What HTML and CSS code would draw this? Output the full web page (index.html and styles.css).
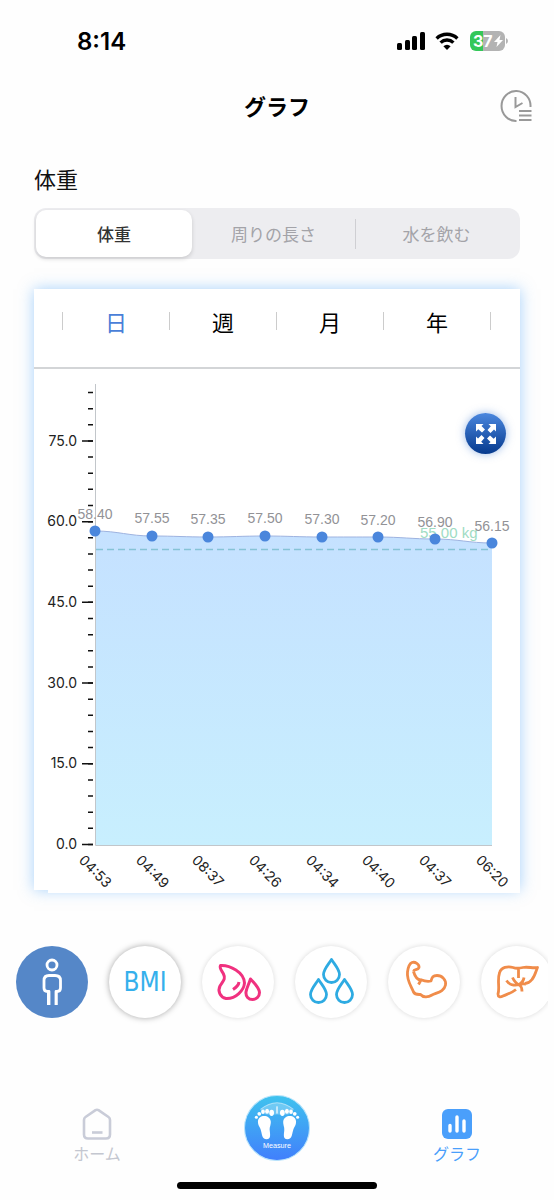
FILE: index.html
```html
<!DOCTYPE html>
<html lang="ja">
<head>
    <meta charset="UTF-8">
    <meta name="viewport" content="width=device-width, initial-scale=1.0">
    <title>グラフ</title>
    <link rel="stylesheet" href="styles.css">
</head>
<body>
    <!-- Status bar -->
    <div class="status">
        <span class="time">8:14</span>
        <div class="status-icons">
            <svg width="28" height="20" viewBox="0 0 28 20">
                <rect x="0" y="12" width="5" height="7" rx="1.5"/>
                <rect x="8" y="9" width="5" height="10" rx="1.5"/>
                <rect x="15" y="5" width="5" height="14" rx="1.5"/>
                <rect x="23" y="1" width="5" height="18" rx="1.5"/>
            </svg>
            <svg width="24" height="20" viewBox="0 0 24 20">
                <path d="M1.6 7.4a15 15 0 0 1 20.8 0M5.6 11.6a9.2 9.2 0 0 1 12.8 0" fill="none" stroke="#000" stroke-width="3.4"/>
                <path d="M12 19l-3.6-3.8a5 5 0 0 1 7.2 0z"/>
            </svg>
            <svg width="39" height="22" viewBox="0 0 39 22">
                <path d="M7 1h7v20H7a6 6 0 0 1-6-6V7a6 6 0 0 1 6-6z" fill="#34c759"/>
                <path d="M14 1h16a6 6 0 0 1 6 6v8a6 6 0 0 1-6 6H14z" fill="#b3b3b3"/>
                <path d="M37 8q2 1 2 3t-2 3z" fill="#b3b3b3"/>
                <text class="battery-text" x="4" y="17">37</text>
                <path d="M31.500 5l-6.500 7h3.500l-1 5 6.500-7h-3.500z" fill="#fff"/>
            </svg>
        </div>
    </div>

    <header>
        <h1>グラフ</h1>
        <button class="history" aria-label="履歴">
            <svg width="32" height="34" viewBox="0 0 32 34" fill="none" stroke="#999" stroke-width="2">
                <path d="M30.500 18A14.500 15 0 1 0 16.500 32M15.500 8v10l7-4M19 22h12.500M19 26.500h12.500M19 31h12.500"/>
            </svg>
        </button>
    </header>

    <main>
        <h2>体重</h2>

        <div class="segments">
            <button class="segment selected">体重</button>
            <button class="segment">周りの長さ</button>
            <button class="segment divided">水を飲む</button>
        </div>

        <div class="card">
            <div class="periods">
                <button class="period active">日</button>
                <button class="period">週</button>
                <button class="period">月</button>
                <button class="period">年</button>
            </div>

            <svg class="chart" viewBox="0 0 486 521">
                <defs>
                    <linearGradient id="area" x1="0" y1="0" x2="0" y2="1">
                        <stop offset="0" stop-color="#c5e1ff"/>
                        <stop offset="1" stop-color="#c8effe"/>
                    </linearGradient>
                </defs>
                <path d="M61 162C84 162 95 167 118 167S151 168 174 168S208 167 231 167S265 168 288 168S321 168 344 168S378 170 401 170S435 174 458 174V476H61Z" fill="url(#area)"/>
                <path d="M61 162C84 162 95 167 118 167S151 168 174 168S208 167 231 167S265 168 288 168S321 168 344 168S378 170 401 170S435 174 458 174" fill="none" stroke="#9eb3e0"/>
                <path d="M61.500 15V476.500H458" fill="none" stroke="#c2c6ca"/>
                <path d="M62 180.500H458" stroke="#86c3d6" stroke-width="1.500" stroke-dasharray="7 4"/>

                <!-- scale ticks -->
                <path d="M56.500 476.200V22" stroke="#111" stroke-width="5" stroke-dasharray="1.500 14.640"/>
                <path d="M53.500 476.200V70" stroke="#111" stroke-width="11" stroke-dasharray="1.500 79.200"/>
                <g class="scale">
                    <text x="43" y="77">75.0</text>
                    <text x="43" y="157">60.0</text>
                    <text x="43" y="238">45.0</text>
                    <text x="43" y="319">30.0</text>
                    <text x="43" y="399">15.0</text>
                    <text x="43" y="480">0.0</text>
                </g>

                <text class="goal" x="386" y="169">55.00 kg</text>
                <g fill="#4a86dc">
                    <circle cx="61" cy="162" r="5.500"/>
                    <circle cx="118" cy="167" r="5.500"/>
                    <circle cx="174" cy="168" r="5.500"/>
                    <circle cx="231" cy="167" r="5.500"/>
                    <circle cx="288" cy="168" r="5.500"/>
                    <circle cx="344" cy="168" r="5.500"/>
                    <circle cx="401" cy="170" r="5.500"/>
                    <circle cx="458" cy="174" r="5.500"/>
                </g>
                <g class="values">
                    <text x="61" y="150">58.40</text>
                    <text x="118" y="154">57.55</text>
                    <text x="174" y="155">57.35</text>
                    <text x="231" y="154">57.50</text>
                    <text x="288" y="155">57.30</text>
                    <text x="344" y="156">57.20</text>
                    <text x="401" y="158">56.90</text>
                    <text x="458" y="162">56.15</text>
                </g>
                <g class="times">
                    <text transform="translate(44 492) rotate(45)">04:53</text>
                    <text transform="translate(101 492) rotate(45)">04:49</text>
                    <text transform="translate(157 492) rotate(45)">08:37</text>
                    <text transform="translate(214 492) rotate(45)">04:26</text>
                    <text transform="translate(271 492) rotate(45)">04:34</text>
                    <text transform="translate(327 492) rotate(45)">04:40</text>
                    <text transform="translate(384 492) rotate(45)">04:37</text>
                    <text transform="translate(441 492) rotate(45)">06:20</text>
                </g>
            </svg>

            <button class="expand" aria-label="拡大">
                <svg width="20" height="20" viewBox="0 0 20 20" fill="#fff">
                    <path id="arrow" d="M0 0H7.500L5.500 2L9 5.500L6 8.500L2.300 5.200L0 7.500Z"/>
                    <use href="#arrow" transform="rotate(90 10 10)"/>
                    <use href="#arrow" transform="rotate(180 10 10)"/>
                    <use href="#arrow" transform="rotate(270 10 10)"/>
                </svg>
            </button>
        </div>
    </main>

    <!-- Metric picker -->
    <div class="metrics">
        <button class="metric current" aria-label="体重">
            <svg viewBox="0 0 72 72" stroke="#fff" stroke-width="2.800">
                <circle cx="36" cy="19" r="5"/>
                <path d="M33 59V45.500H31.500Q28 45.500 28 42V34.500Q28 29.500 33 29.500H39Q44.500 29.500 44.500 34.500V42Q44.500 45.500 41 45.500H40V59"/>
                <path d="M31.800 45V59M40.800 45V59" stroke-width="1.600"/>
            </svg>
        </button>
        <button class="metric bmi">BMI</button>
        <button class="metric" aria-label="体脂肪">
            <svg viewBox="0 0 72 72" stroke="#f0317f" stroke-width="3">
                <path d="M18.500 19.500C28 19 42 26 42.500 37C42 44 34 53 24 52.500C18 51 15.500 45 18 40C21 35 24 33 21.500 28C20 25 17 22 18.500 19.500Z"/>
                <path d="M37 36Q36.500 40 31 43.500"/>
                <path d="M48.500 33C53 38 57.500 42 57.500 46.500C57.500 51 54 53.500 50.500 53.500C46.500 53.500 43.500 50.500 44 46C44.500 42 47 38 48.500 33Z"/>
            </svg>
        </button>
        <button class="metric" aria-label="水分">
            <svg viewBox="0 0 72 72" stroke="#2eabe2" stroke-width="2.800">
                <path id="drop" d="M36.500 13.500C33 19 28.500 23.500 28.500 28.500A8 8 0 0 0 44.500 28.500C44.500 23.500 40 19 36.500 13.500Z"/>
                <use href="#drop" x="-13" y="20"/>
                <use href="#drop" x="13" y="20"/>
            </svg>
        </button>
        <button class="metric" aria-label="筋肉">
            <svg viewBox="0 0 72 72" stroke="#f08c4a" stroke-width="2.800">
                <path d="M25.500 25.500C26 23 30 24.500 31 21.500C31.500 18 27 15.500 24 16.500C20.500 18 20 22 19.500 26C18.500 34 23 40 25.500 46C27 49 30 48.500 32.500 48.500C35 51.500 40 51.500 44 49C49 46.500 56 46 57.500 39C58.500 34 54 29.500 49 29.500C45 29.500 44 31 43 35C38 36 36 35 32.500 33.500M30.500 38.500L33 34C28 34 26.500 29 25.500 25.500"/>
            </svg>
        </button>
        <button class="metric" aria-label="内臓脂肪">
            <svg viewBox="0 0 72 72" stroke="#f08c4a" stroke-width="2.800">
                <path d="M35 43.500C30 47.500 26 48 22 50C19 51.500 17 51 17 48C19 42 16 34 18.500 27C20 21 27 20 32 21.500C36 23 38 22.500 42 21.500C47 20.500 52 22.500 56.500 21.500C55 25 54 30 51 33.500C49 36 46 37.500 44 37.500M37.500 22.500V32M25.500 34.500C28 38.500 33 40 38 38.500M31.500 31.500C33 35 36 38 39 39.500Q41 41 41 45.500M43 31.500Q42.500 36 38 38.500M45 38Q41.500 37.500 38 38.500"/>
            </svg>
        </button>
    </div>

    <nav>
        <a href="#home">
            <svg width="30" height="32" viewBox="0 0 30 32" fill="none" stroke="#c9ccd8" stroke-width="2.600" stroke-linejoin="round">
                <path d="M13.500 2.200Q15 1.200 16.500 2.200L26.500 9Q28 10 28 12V26.500Q28 30.500 24 30.500H6Q2 30.500 2 26.500V12Q2 10 3.500 9Z"/>
                <path d="M10 24.500H20.500"/>
            </svg>
            ホーム
        </a>
        <a class="measure" href="#measure">
            <svg width="66" height="66" viewBox="0 0 64 64">
                <defs>
                    <linearGradient id="sky" x1="0" y1="0" x2="0" y2="1">
                        <stop offset="0" stop-color="#3fc3ee"/>
                        <stop offset="1" stop-color="#417ffc"/>
                    </linearGradient>
                </defs>
                <circle cx="32" cy="32" r="31.500" fill="url(#sky)" stroke="#b9e4fb"/>
                <path d="M16 14Q32 1 48 14L43 19H21Z" fill="#fff" fill-opacity=".25"/>
                <path d="M16 14Q32 1 48 14" fill="none" stroke="#fff" stroke-opacity=".5"/>
                <path d="M31 11h2v7h-2z" fill="#fff" fill-opacity=".6"/>
                <g id="foot" fill="#fff">
                    <path d="M13.500 26C13.500 18.500 25.500 18.500 26 26C26 30 24.500 31 25 35C25.500 39 26 43 22 43C17 43 17.500 37 16 33C15 30.500 13.500 29.500 13.500 26Z"/>
                    <circle cx="12" cy="21.500" r="1.500"/>
                    <circle cx="14.800" cy="18.300" r="1.800"/>
                    <ellipse cx="18.400" cy="16.300" rx="1.800" ry="2.200"/>
                    <ellipse cx="22.400" cy="15.800" rx="1.900" ry="2.500"/>
                    <ellipse cx="26.800" cy="17.300" rx="2.300" ry="3"/>
                </g>
                <use href="#foot" transform="matrix(-1 0 0 1 64 0)"/>
                <text x="32" y="51">Measure</text>
            </svg>
        </a>
        <a class="here" href="#graph">
            <svg width="30" height="32" viewBox="0 0 30 32">
                <rect y="1" width="30" height="30" rx="6" fill="#4a9ffb"/>
                <path d="M8 17.500V23M15 9V23M22 13V23" stroke="#fff" stroke-width="3.400" stroke-linecap="round"/>
            </svg>
            グラフ
        </a>
    </nav>
    <div class="home-bar"></div>
</body>
</html>
```
FILE: styles.css
```css
* {
    box-sizing: border-box;
}
body {
    font-family: "Noto Sans CJK JP", sans-serif;
    background: #fefefe;
    color: #111;
    margin: 0;
    min-height: 100vh;
    display: flex;
    flex-direction: column;
    overflow-x: hidden;
}
button {
    font-family: inherit;
    padding: 0;
    border: 0;
    background: none;
    color: inherit;
    cursor: pointer;
}
svg {
    display: block;
}
.status {
    display: flex;
    justify-content: space-between;
    align-items: center;
    height: 82px;
    padding: 0 46px 0 77px;
}
.time {
    font-family: Inter, sans-serif;
    font-size: 24px;
    font-weight: 600;
    color: #000;
}
.status-icons {
    display: flex;
    align-items: center;
    gap: 10px;
}
.battery-text {
    font: 700 16px Inter, sans-serif;
    fill: #fff;
}
header {
    display: grid;
    grid-template-columns: 1fr auto 1fr;
    align-items: center;
    height: 48px;
    padding: 0 22px;
}
h1 {
    grid-column: 2;
    margin: 0;
    padding-bottom: 2px;
    font-size: 22px;
    font-weight: 700;
    color: #000;
}
.history {
    justify-self: end;
}
main {
    padding: 32px 34px 0;
}
h2 {
    margin: 0;
    font-size: 22px;
    line-height: 32px;
    font-weight: 400;
}
.segments {
    display: grid;
    grid-template-columns: 156px 1fr 1fr;
    height: 51px;
    margin-top: 14px;
    padding: 2px;
    border-radius: 12px;
    background: #ededf0;
}
.segment {
    font-size: 17px;
    color: #a3a3a8;
    border-radius: 10px;
}
.selected {
    background: #fff;
    color: #333;
    font-weight: 500;
    box-shadow: 0 2px 4px rgba(0, 0, 0, 0.15);
}
.divided {
    border-radius: 0;
    background: linear-gradient(#cfcfd3, #cfcfd3) no-repeat left center / 1px 30px;
}
.card {
    position: relative;
    margin-top: 30px;
    background: #fff;
    box-shadow: 0 0 14px rgba(80, 165, 250, 0.5);
}
/* the plot panel hangs slightly below the card */
.card::after {
    content: "";
    position: absolute;
    left: 14px;
    right: 0;
    bottom: -3px;
    height: 3px;
    background: #fff;
}
.periods {
    display: flex;
    align-items: flex-start;
    height: 80px;
    padding: 23px 29px 0 28px;
    border-bottom: 2px solid #d3d5d7;
}
.period {
    flex: 1;
    height: 18px;
    font-size: 22px;
    line-height: 16px;
    color: #000;
    border-left: 1px solid #ccc;
}
.period:last-child {
    border-right: 1px solid #ccc;
}
.active {
    color: #4a7fd8;
}
.chart {
    width: 100%;
    height: auto;
    overflow: visible;
}
.scale, .times {
    font-family: Inter, sans-serif;
    font-size: 14px;
    fill: #222;
}
.scale {
    text-anchor: end;
}
.values {
    font-family: "Liberation Sans", sans-serif;
    font-size: 14px;
    fill: #929296;
    text-anchor: middle;
}
.goal {
    font-family: "Liberation Sans", sans-serif;
    font-size: 15px;
    fill: #a0dcc3;
}
.expand {
    position: absolute;
    top: 124px;
    right: 14px;
    width: 41px;
    height: 41px;
    display: grid;
    place-items: center;
    border-radius: 50%;
    background: linear-gradient(#4b87de, #063a8e);
    box-shadow: 0 0 8px rgba(60, 120, 210, 0.5);
}
.metrics {
    display: flex;
    gap: 21px;
    margin: 46px 6px 0 0;
    padding: 10px 0 10px 16px;
    overflow: hidden;
}
.metric {
    flex: none;
    width: 72px;
    height: 72px;
    border-radius: 50%;
    background: #fff;
    box-shadow: 0 0 5px rgba(0, 0, 0, 0.15);
}
.metric svg {
    fill: none;
    stroke-linejoin: round;
}
.current {
    background: #5587c8;
    box-shadow: none;
}
.bmi {
    font-family: "DejaVu Sans Condensed", "Liberation Sans", sans-serif;
    font-size: 26px;
    color: #35b0ec;
    box-shadow: 0 0 6px rgba(0, 0, 0, 0.35);
}
nav {
    display: grid;
    grid-template-columns: 1fr 1fr 1fr;
    align-items: center;
    margin-top: auto;
    padding: 0 7px;
}
nav a {
    display: flex;
    flex-direction: column;
    align-items: center;
    gap: 2px;
    padding-top: 16px;
    font-size: 16px;
    line-height: 22px;
    color: #c4c7d0;
    text-decoration: none;
}
nav .measure {
    padding: 0;
}
.measure text {
    font: 7px "Liberation Sans", sans-serif;
    fill: #fff;
    text-anchor: middle;
}
nav .here {
    color: #4a9ffb;
}
.home-bar {
    width: 36%;
    height: 7px;
    margin: 18px auto 11px;
    border-radius: 4px;
    background: #000;
}
```
